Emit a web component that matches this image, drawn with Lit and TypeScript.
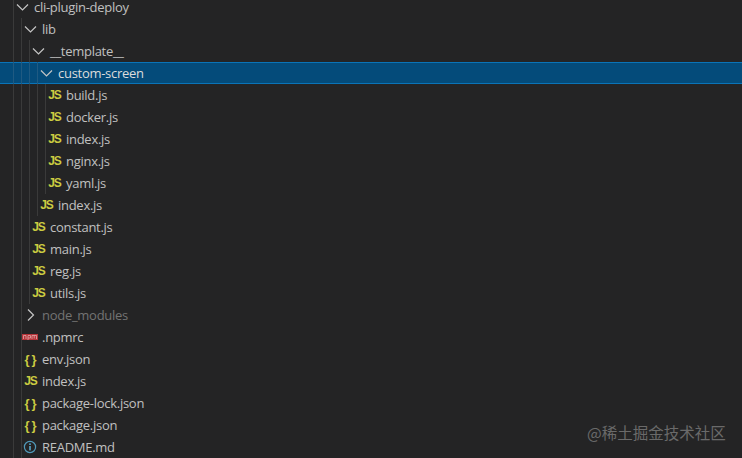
import { LitElement, html, css, svg } from 'lit'
import { customElement } from 'lit/decorators.js'

type Icon = 'js' | 'json' | 'npm' | 'info'
interface Row {
  name: string
  depth: number
  folder?: 'open' | 'closed'
  icon?: Icon
  selected?: boolean
  dim?: boolean
}

const rows: Row[] = [
  { name: 'cli-plugin-deploy', depth: 0, folder: 'open' },
  { name: 'lib', depth: 1, folder: 'open' },
  { name: '__template__', depth: 2, folder: 'open' },
  { name: 'custom-screen', depth: 3, folder: 'open', selected: true },
  { name: 'build.js', depth: 4, icon: 'js' },
  { name: 'docker.js', depth: 4, icon: 'js' },
  { name: 'index.js', depth: 4, icon: 'js' },
  { name: 'nginx.js', depth: 4, icon: 'js' },
  { name: 'yaml.js', depth: 4, icon: 'js' },
  { name: 'index.js', depth: 3, icon: 'js' },
  { name: 'constant.js', depth: 2, icon: 'js' },
  { name: 'main.js', depth: 2, icon: 'js' },
  { name: 'reg.js', depth: 2, icon: 'js' },
  { name: 'utils.js', depth: 2, icon: 'js' },
  { name: 'node_modules', depth: 1, folder: 'closed', dim: true },
  { name: '.npmrc', depth: 1, icon: 'npm' },
  { name: 'env.json', depth: 1, icon: 'json' },
  { name: 'index.js', depth: 1, icon: 'js' },
  { name: 'package-lock.json', depth: 1, icon: 'json' },
  { name: 'package.json', depth: 1, icon: 'json' },
  { name: 'README.md', depth: 1, icon: 'info' },
]

const chevronDown = svg`<path d="M2 4.5 L7.5 10 L13 4.5" fill="none" stroke="currentColor" stroke-width="1.2"/>`
const chevronRight = svg`<path d="M5 1.5 L10.5 7 L5 12.5" fill="none" stroke="currentColor" stroke-width="1.2"/>`

@customElement('app-root')
export class AppRoot extends LitElement {
  static styles = css`
    :host {
      display: block;
      height: 458px;
      overflow: hidden;
      background: #242425;
      font-family: 'Open Sans', 'Noto Sans', sans-serif;
      font-size: 13px;
      letter-spacing: -0.28px;
      color: #c0c0c0;
      position: relative;
    }
    .row {
      display: flex;
      align-items: center;
      height: 22px;
      box-sizing: border-box;
      position: relative;
      white-space: nowrap;
    }
    .row:first-child {
      margin-top: -4px;
    }
    .row.selected {
      background: #044b7a;
      border-top: 1px solid #0a74b8;
      border-bottom: 1px solid #0a74b8;
      color: #dcdcdc;
    }
    .row.dim {
      color: #737373;
    }
    .label {
      line-height: 14px;
    }
    .guide {
      position: absolute;
      top: 0;
      bottom: 0;
      width: 1px;
      background: #3a3a3a;
    }
    .row.selected .guide {
      top: -1px;
      bottom: -1px;
      background: #1f5a82;
    }
    .slot {
      display: flex;
      align-items: center;
      justify-content: center;
      flex: none;
      width: 18px;
      height: 16px;
      margin-right: 3px;
      letter-spacing: 0;
    }
    .slot svg {
      display: block;
      overflow: visible;
    }
    .chev {
      color: #c5c5c5;
    }
    .js {
      font-family: 'Liberation Sans', sans-serif;
      font-weight: 700;
      font-size: 12px;
      letter-spacing: -1.2px;
      margin-left: 1px;
      color: #cbcb41;
    }
    .json {
      font-family: 'Liberation Sans', sans-serif;
      font-weight: 700;
      font-size: 13px;
      color: #cbcb41;
      letter-spacing: 2px;
      margin-right: -2px;
      margin-left: 1px;
    }
    .watermark {
      position: absolute;
      left: 587px;
      top: 421px;
      font-family: 'Noto Sans CJK SC', 'Noto Sans', sans-serif;
      font-size: 15.5px;
      letter-spacing: 0;
      color: #6a6a6a;
      white-space: nowrap;
    }
  `

  private renderIcon(row: Row) {
    if (row.folder) {
      return html`<svg class="chev" width="14" height="14" viewBox="0 0 14 14">
        ${row.folder === 'open' ? chevronDown : chevronRight}
      </svg>`
    }
    switch (row.icon) {
      case 'js':
        return html`<span class="js">JS</span>`
      case 'json':
        return html`<span class="json">{}</span>`
      case 'npm':
        return html`<svg width="16" height="6" viewBox="0 0 16 6">
          <rect width="16" height="6" fill="#b5343a" />
          <path d="M1.5 5V1.5H4V5M6 6V1.5H8.5V4H6M10 5V1.5H14.5V5M12.2 1.5V4.5" fill="none" stroke="#e0a8a8" stroke-width=".8" />
        </svg>`
      case 'info':
        return html`<svg width="14" height="14" viewBox="0 0 14 14">
          <circle cx="7" cy="7" r="5.6" fill="none" stroke="#519aba" stroke-width="1.2" />
          <rect x="6.1" y="6" width="1.8" height="4.4" fill="#519aba" />
          <rect x="6.1" y="3.4" width="1.8" height="1.6" fill="#519aba" />
        </svg>`
    }
    return null
  }

  private renderRow(row: Row) {
    const classes = ['row', row.selected ? 'selected' : '', row.dim ? 'dim' : ''].join(' ')
    // one guide per ancestor, plus the root's own at x=13
    const guides = Array.from({ length: row.depth + 1 }, (_, i) => i)
    return html`<div class=${classes} style="padding-left:${13 + row.depth * 8}px">
      ${guides.map((i) => html`<span class="guide" style="left:${13 + i * 8}px"></span>`)}
      <span class="slot">${this.renderIcon(row)}</span>
      <span class="label">${row.name}</span>
    </div>`
  }

  render() {
    return html`
      <div class="tree">${rows.map((r) => this.renderRow(r))}</div>
      <div class="watermark">@稀土掘金技术社区</div>
    `
  }
}
